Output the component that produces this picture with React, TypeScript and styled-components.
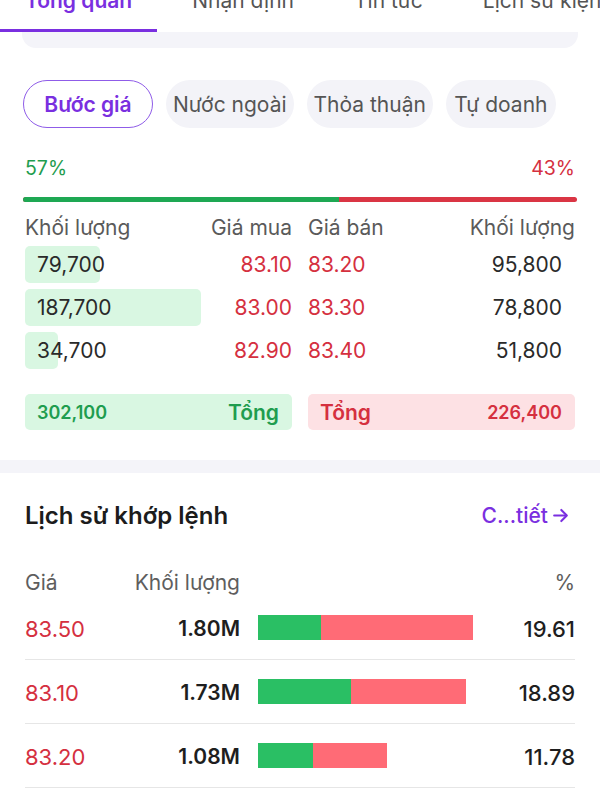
import React from "react";
import styled, { createGlobalStyle } from "styled-components";

const GlobalStyle = createGlobalStyle`
  html, body { margin: 0; padding: 0; background: #ffffff; }
  body { font-family: Inter, "Noto Sans", "Liberation Sans", sans-serif; overflow: hidden; }
  * { box-sizing: border-box; }
`;

const PURPLE = "#7a2fe0";
const RED = "#d5303f";
const GREEN = "#1f9d4f";

const Page = styled.div`
  width: 600px;
  height: 800px;
  overflow: hidden;
  background: #fff;
`;

const TabBar = styled.div`
  display: flex;
  gap: 10px;
  height: 52px;
  margin-top: -20px;
  white-space: nowrap;
  overflow: hidden;
`;

const Tab = styled.div<{ $active?: boolean }>`
  flex: none;
  padding: 9px 25px 0;
  font-size: 21px;
  line-height: 24px;
  font-weight: ${(p) => (p.$active ? 600 : 400)};
  color: ${(p) => (p.$active ? PURPLE : "#555")};
  border-bottom: 3px solid ${(p) => (p.$active ? PURPLE : "transparent")};
`;

const CardStub = styled.div`
  height: 16px;
  margin: 0 22px;
  background: #f4f4f9;
  border-radius: 0 0 14px 14px;
`;

const Section = styled.div`
  padding: 0 25px;
`;

const PillRow = styled.div`
  display: flex;
  gap: 13px;
  margin: 32px -2px 0;
`;

const Pill = styled.div<{ $active?: boolean }>`
  height: 48px;
  display: flex;
  align-items: center;
  justify-content: center;
  padding: 0 ${(p) => (p.$active ? 16 : 6)}px;
  border-radius: 24px;
  font-size: 21px;
  font-weight: ${(p) => (p.$active ? 600 : 400)};
  color: ${(p) => (p.$active ? PURPLE : "#555")};
  background: ${(p) => (p.$active ? "#fff" : "#f3f3f8")};
  border: 1.5px solid ${(p) => (p.$active ? "#8f5ce8" : "transparent")};
  min-width: ${(p) => (p.$active ? 130 : 110)}px;
`;

const RatioRow = styled.div`
  display: flex;
  justify-content: space-between;
  margin-top: 28px;
  font-size: 19.5px;
  line-height: 24px;
`;

const RatioText = styled.span<{ $color: string }>`
  color: ${(p) => p.$color};
`;

const RatioBar = styled.div`
  display: flex;
  height: 5px;
  margin: 17px -2px 0;
  border-radius: 3px;
  overflow: hidden;
  background: #da3544;
`;

const RatioFill = styled.div`
  height: 100%;
  background: #1ea853;
`;

const BookGrid = styled.div`
  display: grid;
  grid-template-columns: 1fr 1fr;
  column-gap: 16px;
`;

const HalfRow = styled.div`
  display: flex;
  justify-content: space-between;
  align-items: center;
`;

const BookHeader = styled(BookGrid)`
  margin-top: 13px;
  font-size: 21px;
  line-height: 26px;
  color: #5a5a5a;
`;

const BookRows = styled.div`
  display: flex;
  flex-direction: column;
  gap: 6px;
  margin-top: 5px;
`;

const BidCell = styled(HalfRow)`
  position: relative;
  height: 37px;
  font-size: 21px;
`;

const BidBar = styled.div`
  position: absolute;
  left: 0;
  top: 0;
  bottom: 0;
  background: #d9f7e2;
  border-radius: 5px;
  z-index: 0;
`;

const Vol = styled.span<{ $pad?: string }>`
  position: relative;
  z-index: 1;
  color: #2a2a2a;
  padding: ${(p) => p.$pad || "0"};
`;

const Price = styled.span`
  position: relative;
  z-index: 1;
  color: ${RED};
`;

const AskCell = styled(HalfRow)`
  height: 37px;
  font-size: 21px;
`;

const TotalGrid = styled(BookGrid)`
  margin-top: 25px;
`;

const TotalBox = styled.div<{ $kind: "buy" | "sell" }>`
  height: 36px;
  display: flex;
  justify-content: space-between;
  align-items: center;
  border-radius: 5px;
  padding: 0 13px 0 12px;
  background: ${(p) => (p.$kind === "buy" ? "#d9f7e2" : "#fde1e4")};
  color: ${(p) => (p.$kind === "buy" ? GREEN : RED)};
`;

const TotalNum = styled.span`
  font-size: 18px;
  font-weight: 600;
`;

const TotalLabel = styled.span`
  font-size: 21px;
  font-weight: 600;
`;

const Band = styled.div`
  height: 13px;
  margin-top: 30px;
  background: #f4f4f9;
`;

const TitleRow = styled.div`
  display: flex;
  justify-content: space-between;
  align-items: center;
  margin-top: 28px;
  height: 28px;
`;

const Title = styled.h2`
  margin: 0;
  font-size: 24px;
  font-weight: 600;
  color: #1c1c1c;
`;

const LinkText = styled.span`
  display: flex;
  align-items: center;
  gap: 3px;
  font-size: 21px;
  font-weight: 500;
  color: ${PURPLE};
  margin-right: 5px;
`;

const TradeGrid = styled.div`
  display: grid;
  grid-template-columns: 100px 115px 1fr 80px;
  align-items: center;
`;

const TradeHeader = styled(TradeGrid)`
  margin-top: 40px;
  height: 27px;
  font-size: 21px;
  color: #5e5e5e;
`;

const TradeRow = styled(TradeGrid)`
  height: 64px;
  padding-top: 2px;
  border-bottom: 1px solid #e6e6e6;
`;

const Right = styled.span`
  text-align: right;
`;

const TradePrice = styled.span`
  font-size: 22px;
  color: ${RED};
`;

const TradeVol = styled.span`
  text-align: right;
  font-size: 21px;
  font-weight: 600;
  color: #1e1e1e;
`;

const TradePct = styled.span`
  text-align: right;
  font-size: 22px;
  font-weight: 500;
  color: #1e1e1e;
`;

const BarCell = styled.div`
  display: flex;
  padding-left: 18px;
  height: 25px;
  margin-top: -3px;
`;

const Seg = styled.div<{ $color: string }>`
  height: 100%;
  background: ${(p) => p.$color};
`;

const tabs = ["Tổng quan", "Nhận định", "Tin tức", "Lịch sử kiện"];
const pills = ["Bước giá", "Nước ngoài", "Thỏa thuận", "Tự doanh"];

const book = [
  { bidVol: 79700, bid: "83.10", ask: "83.20", askVol: "95,800" },
  { bidVol: 187700, bid: "83.00", ask: "83.30", askVol: "78,800" },
  { bidVol: 34700, bid: "82.90", ask: "83.40", askVol: "51,800" },
];
const maxBid = Math.max(...book.map((b) => b.bidVol));

const trades = [
  { price: "83.50", vol: "1.80M", green: 63, red: 152, pct: "19.61" },
  { price: "83.10", vol: "1.73M", green: 93, red: 115, pct: "18.89" },
  { price: "83.20", vol: "1.08M", green: 55, red: 74, pct: "11.78" },
];

const fmt = (n: number) => n.toLocaleString("en-US");

export default function App() {
  return (
    <Page>
      <GlobalStyle />
      <TabBar>
        {tabs.map((t, i) => (
          <Tab key={t} $active={i === 0}>
            {t}
          </Tab>
        ))}
      </TabBar>
      <CardStub />
      <Section>
        <PillRow>
          {pills.map((p, i) => (
            <Pill key={p} $active={i === 0}>
              {p}
            </Pill>
          ))}
        </PillRow>
        <RatioRow>
          <RatioText $color="#1f9d4f">57%</RatioText>
          <RatioText $color={RED}>43%</RatioText>
        </RatioRow>
        <RatioBar>
          <RatioFill style={{ width: "57%" }} />
        </RatioBar>
        <BookHeader>
          <HalfRow>
            <span>Khối lượng</span>
            <span>Giá mua</span>
          </HalfRow>
          <HalfRow>
            <span>Giá bán</span>
            <span>Khối lượng</span>
          </HalfRow>
        </BookHeader>
        <BookRows>
          {book.map((r) => (
            <BookGrid key={r.bid}>
              <BidCell>
                <BidBar style={{ width: `${(r.bidVol / maxBid) * 66}%` }} />
                <Vol $pad="0 0 0 12px">{fmt(r.bidVol)}</Vol>
                <Price>{r.bid}</Price>
              </BidCell>
              <AskCell>
                <Price>{r.ask}</Price>
                <Vol $pad="0 13px 0 0">{r.askVol}</Vol>
              </AskCell>
            </BookGrid>
          ))}
        </BookRows>
        <TotalGrid>
          <TotalBox $kind="buy">
            <TotalNum>302,100</TotalNum>
            <TotalLabel>Tổng</TotalLabel>
          </TotalBox>
          <TotalBox $kind="sell">
            <TotalLabel>Tổng</TotalLabel>
            <TotalNum>226,400</TotalNum>
          </TotalBox>
        </TotalGrid>
      </Section>
      <Band />
      <Section>
        <TitleRow>
          <Title>Lịch sử khớp lệnh</Title>
          <LinkText>
            C...tiết
            <svg width="19" height="19" viewBox="0 0 24 24" fill="none" stroke={PURPLE} strokeWidth="2.6" strokeLinecap="round" strokeLinejoin="round">
              <path d="M4 12h15" />
              <path d="M13 5l7 7-7 7" />
            </svg>
          </LinkText>
        </TitleRow>
        <TradeHeader>
          <span>Giá</span>
          <Right>Khối lượng</Right>
          <span />
          <Right>%</Right>
        </TradeHeader>
        {trades.map((t) => (
          <TradeRow key={t.price}>
            <TradePrice>{t.price}</TradePrice>
            <TradeVol>{t.vol}</TradeVol>
            <BarCell>
              <Seg $color="#2abf64" style={{ width: t.green }} />
              <Seg $color="#ff6b76" style={{ width: t.red }} />
            </BarCell>
            <TradePct>{t.pct}</TradePct>
          </TradeRow>
        ))}
      </Section>
    </Page>
  );
}
